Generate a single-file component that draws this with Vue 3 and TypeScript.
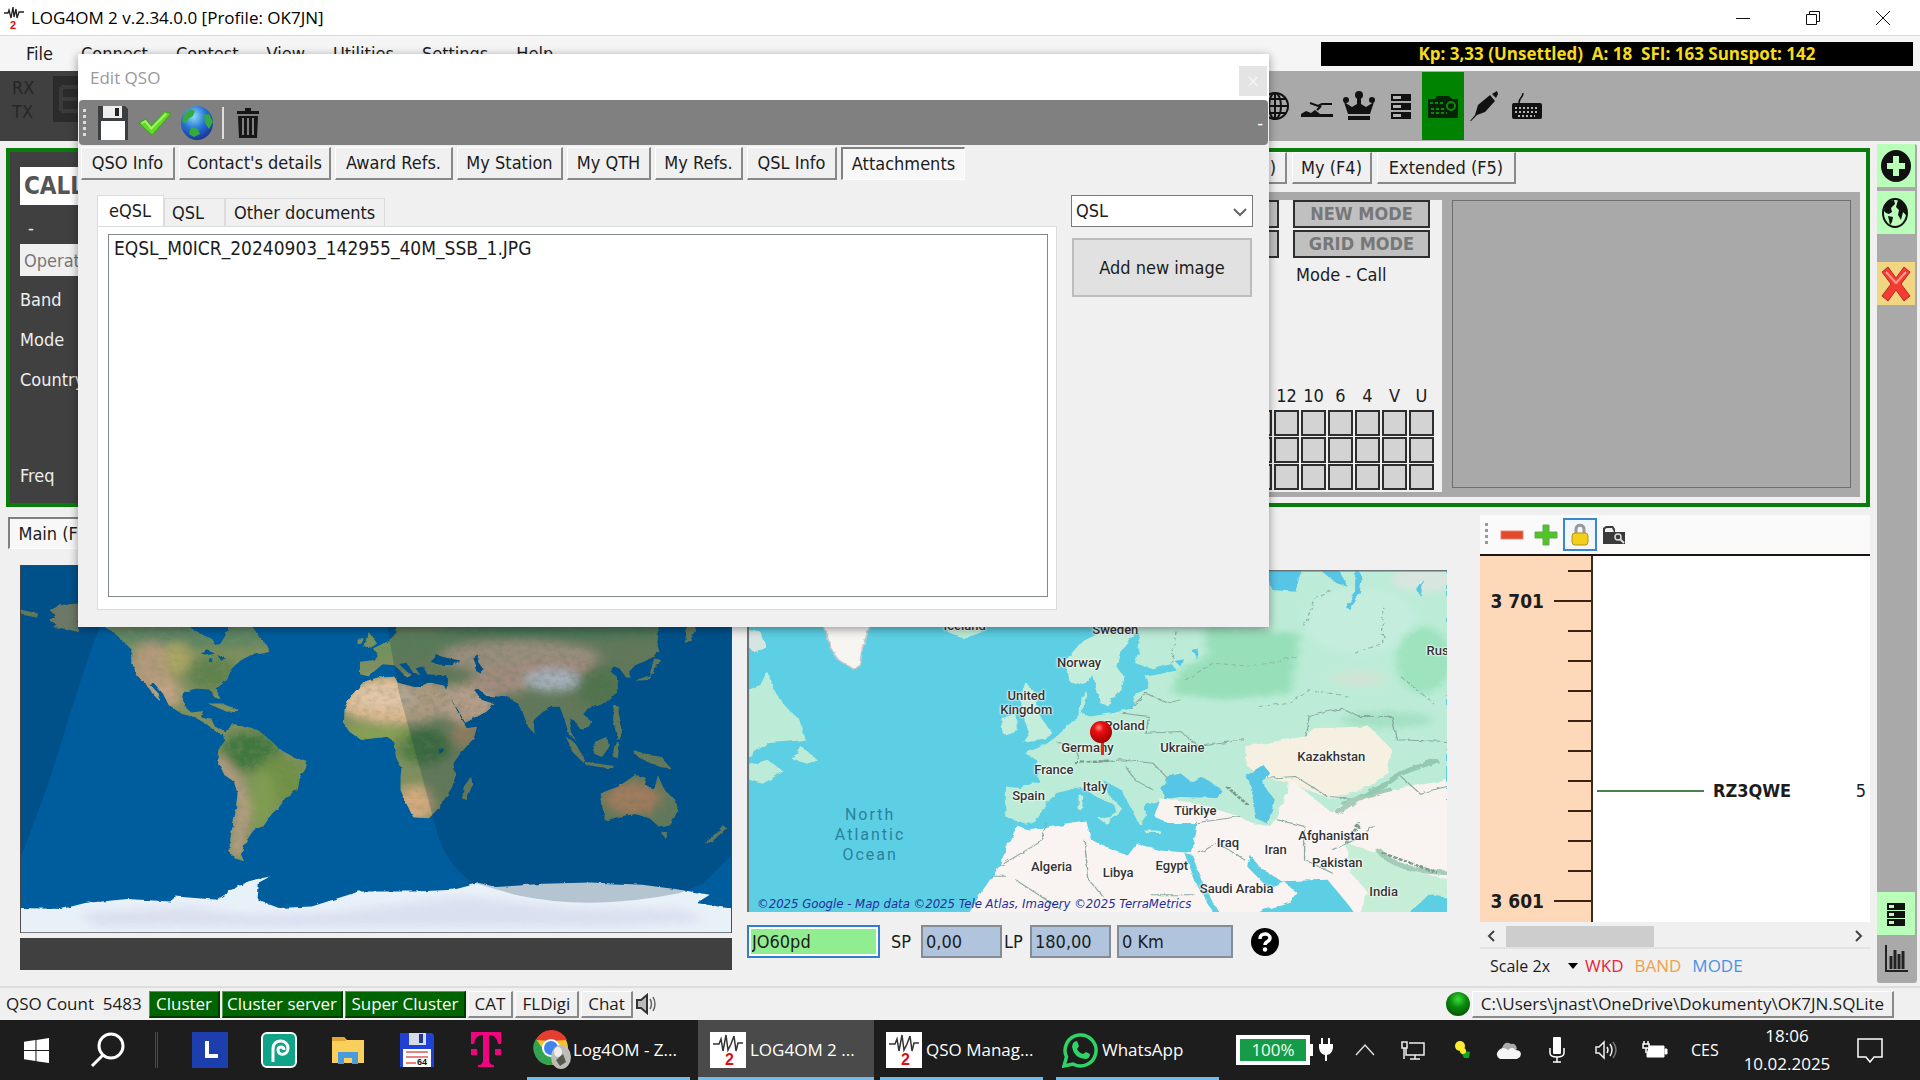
<script setup lang="ts">
interface MapLabel { text: string; x: number; y: number }

const menus = ['File', 'Connect', 'Contest', 'View', 'Utilities', 'Settings', 'Help']
const dialogTabs = ['QSO Info', "Contact's details", 'Award Refs.', 'My Station', 'My QTH', 'My Refs.', 'QSL Info', 'Attachments']
const bands = ['20', '17', '15', '12', '10', '6', '4', 'V', 'U']
const cellCount = bands.length * 3
const ticks = Array.from({ length: 12 }, (_, i) => ({ y: 16 + i * 30, major: i === 1 || i === 11 }))

// Label coordinates share the coordinate system of the map drawing.
const view = { x: 16, y: 30, w: 1524, h: 1027 }
const labels: MapLabel[] = [
  { text: 'Iceland', x: 490, y: 199 },
  { text: 'Sweden', x: 818, y: 211 },
  { text: 'Norway', x: 739, y: 309 },
  { text: 'United\nKingdom', x: 624, y: 428 },
  { text: 'Poland', x: 838, y: 497 },
  { text: 'Germany', x: 757, y: 565 },
  { text: 'Ukraine', x: 964, y: 565 },
  { text: 'France', x: 684, y: 632 },
  { text: 'Italy', x: 774, y: 683 },
  { text: 'Spain', x: 629, y: 709 },
  { text: 'Türkiye', x: 992, y: 753 },
  { text: 'Kazakhstan', x: 1288, y: 591 },
  { text: 'Russia', x: 1538, y: 272 },
  { text: 'Afghanistan', x: 1293, y: 830 },
  { text: 'Iraq', x: 1063, y: 851 },
  { text: 'Iran', x: 1167, y: 871 },
  { text: 'Pakistan', x: 1301, y: 911 },
  { text: 'Algeria', x: 679, y: 921 },
  { text: 'Libya', x: 824, y: 939 },
  { text: 'Egypt', x: 941, y: 920 },
  { text: 'Saudi Arabia', x: 1082, y: 988 },
  { text: 'India', x: 1402, y: 996 },
]
const place = (l: { x: number; y: number }) => ({
  left: `${((l.x - view.x) / view.w) * 100}%`,
  top: `${((l.y - view.y) / view.h) * 100}%`,
})
</script>

<template>
  <div class="desktop">
    <header class="titlebar">
      <svg class="app-icon" viewBox="0 0 20 24"><path d="M0 7H4L5 4 7 12 9 1 10 11 12 3 13 12 15 6H20" fill="none" stroke="#222" stroke-width="1.3" /><text x="6" y="23" class="two">2</text></svg>
      <h1>LOG4OM 2 v.2.34.0.0 [Profile: OK7JN]</h1>
      <div class="win-buttons">
        <button aria-label="Minimize"><svg viewBox="0 0 16 16"><path d="M1 8.500H15" /></svg></button>
        <button aria-label="Restore"><svg viewBox="0 0 16 16"><path d="M1.500 4.500H11.500V14.500H1.500ZM4.500 4V1.500H14.500V11.500H12" /></svg></button>
        <button aria-label="Close"><svg viewBox="0 0 16 16"><path d="M1 1 15 15M15 1 1 15" /></svg></button>
      </div>
    </header>

    <nav class="menubar">
      <button v-for="m in menus" :key="m">{{ m }}</button>
      <div class="solar">Kp: 3,33 (Unsettled)&nbsp; A: 18&nbsp; SFI: 163 Sunspot: 142</div>
    </nav>

    <div class="radiobar">
      <div class="rig">
        <div class="rxtx"><span>RX</span><span>TX</span></div>
        <div class="freq"><svg viewBox="0 0 24 30"><path d="M4 3H22M4 3V27M4 15H20M4 27H22" fill="none" stroke="#3a3a3a" stroke-width="4" /></svg></div>
      </div>
      <div class="tools">
        <button aria-label="Web"><svg viewBox="0 0 32 32" fill="none" stroke="#111" stroke-width="2"><circle cx="16" cy="16" r="13" /><ellipse cx="16" cy="16" rx="6" ry="13" /><path d="M16 3V29M3 16H29M5 9H27M5 23H27" /></svg></button>
        <button aria-label="Propagation"><svg viewBox="0 0 32 32"><path d="M0 27V24L5 21 10 23 14 20 19 24H32V27Z" fill="#111" /><path d="M9 13 17 16 21 14H31M16 20 20 16" fill="none" stroke="#111" stroke-width="2" /></svg></button>
        <button aria-label="Awards"><svg viewBox="0 0 32 32" fill="#111"><path d="M5 24 1 12 9 17 14 14V8H18V14L23 17 31 12 27 24ZM5 26H27V30H5Z" /><circle cx="16" cy="5" r="4" /><circle cx="3" cy="10" r="3" /><circle cx="29" cy="10" r="3" /></svg></button>
        <button aria-label="Cluster"><svg viewBox="0 0 32 32"><path d="M6 4H26V11H6ZM6 13H26V20H6ZM6 22H26V29H6Z" fill="#111" /><path d="M8 6H16V9H8ZM8 15H16V18H8ZM8 24H16V27H8Z" fill="#b5b5b5" /></svg></button>
        <button class="on" aria-label="Radio"><svg viewBox="0 0 32 32"><path d="M1 9H31V28H1ZM10 6H22L25 9H8Z" fill="#052405" /><circle cx="24" cy="16" r="4" fill="none" stroke="#0a8a0a" stroke-width="2" /><path d="M3 13H16M4 19H17M4 23H20" stroke="#0a8a0a" stroke-width="2" stroke-dasharray="3 2" /></svg></button>
        <button aria-label="Microphone"><svg viewBox="0 0 32 32" fill="#111"><path d="M1 31 6 25 9 15 21 5 26 11 16 22 8 25 2 31ZM23 4 28 1 29 4 27 8Z" /></svg></button>
        <button aria-label="Keyer"><svg viewBox="0 0 32 32"><rect x="1" y="13" width="30" height="16" rx="2" fill="#111" /><path d="M8 13C8 7 12 8 12 3" fill="none" stroke="#111" stroke-width="1.500" /><path d="M4 18H28M4 22H28M7 26H24" stroke="#b5b5b5" stroke-width="2" stroke-dasharray="2 2" /></svg></button>
      </div>
    </div>

    <div class="body">
      <main class="workspace">
        <section class="entry">
          <div class="entry-form">
            <label class="call"><input value="CALLSIGN" aria-label="Callsign" /></label>
            <span class="dash">-</span>
            <input class="operator" placeholder="Operator" aria-label="Operator" />
            <span class="field first">Band</span>
            <span class="field">Mode</span>
            <span class="field">Country</span>
            <span class="field last">Freq</span>
          </div>
          <div class="entry-info">
            <div class="tabrow">
              <button class="raised t1">Info (F2)</button>
              <button class="raised t2">Adds (F3)</button>
              <button class="raised t3">My (F4)</button>
              <button class="raised t4">Extended (F5)</button>
            </div>
            <div class="infopanel">
              <div class="worked">
                <div class="flags">
                  <div class="flagcol"><button disabled>NEW BAND</button><button disabled>GRID BAND</button><span>Band - Call</span></div>
                  <div class="flagcol"><button disabled>NEW MODE</button><button disabled>GRID MODE</button><span>Mode - Call</span></div>
                </div>
                <div class="bandgrid">
                  <span v-for="b in bands" :key="b">{{ b }}</span>
                  <i v-for="n in cellCount" :key="n"></i>
                </div>
              </div>
              <div class="notes"></div>
            </div>
          </div>
        </section>

        <div class="lower">
          <section class="maps">
            <div class="tabrow second"><button class="sunken">Main (F6)</button></div>
            <div class="maprow">
              <div class="worldcol">
                <div class="world">
                <svg viewBox="42 14 1508 1106" preserveAspectRatio="none">
                  <defs>
                    <filter id="rough" x="-5%" y="-5%" width="110%" height="110%"><feTurbulence type="fractalNoise" baseFrequency="0.06" numOctaves="3" seed="4" /><feDisplacementMap in="SourceGraphic" scale="9" /></filter>
                    <filter id="soft" x="-40%" y="-40%" width="180%" height="180%"><feGaussianBlur stdDeviation="12" /></filter>
                    <filter id="grain" x="0" y="0" width="100%" height="100%"><feTurbulence type="fractalNoise" baseFrequency="0.06" numOctaves="4" seed="8" /><feColorMatrix values="0 0 0 0 0.25  0 0 0 0 0.28  0 0 0 0 0.15  0 0 0 2.400 -1" /></filter>
                    <clipPath id="land">
                      <path d="M215 195 240 215 262 245 280 270V310L290 345 310 375 325 405 340 425 335 400 318 375 325 368 345 400 357 435 385 462 410 470 435 490 460 518 474 524 478 515 455 500 447 476 425 470 430 453 405 457 395 445 387 420 390 395 415 385 445 388 458 417 466 415 458 385 480 360 490 325 510 300 530 285 555 280 572 275 565 255 550 235 535 200 485 195 478 225 466 252 455 255 450 238 430 225 405 205 400 195Z" />
                      <path d="M165 130 130 134 105 150 118 165 105 180 120 192 112 200 135 205 165 215ZM42 148 80 160 78 172 52 165 42 160Z" />
                      <path d="M472 520 495 492 515 500 545 510 572 540 592 568 620 590 650 605 647 628 635 650 630 690 605 710 595 735 575 762 557 800 540 805 530 825 518 850 510 885 517 905 497 895 485 875 488 830 498 760 503 700 495 665 475 645 460 600 462 570 475 545Z" />
                      <path d="M770 365 800 352 835 350 842 368 880 382 910 368 940 376 955 420 975 470 988 505 1010 500 1003 535 975 580 960 610 964 650 957 682 945 710 925 750 908 775 875 772 862 735 848 690 848 650 850 625 838 590 835 545 820 530 790 535 765 540 740 515 728 490 730 440 745 405ZM998 650 1000 675 988 720 978 715 982 680Z" />
                      <path d="M762 342V305L790 300 800 280 790 265 820 245 835 225 840 195H1395L1390 240 1396 275 1370 300 1345 315 1332 335 1337 352 1326 352 1312 325 1300 318 1290 332 1306 350 1308 385 1295 415 1270 435 1245 445 1235 462 1252 485 1245 505 1230 510 1215 480 1205 472 1212 525 1224 545 1205 525 1195 475 1185 440 1170 440 1150 455 1130 480 1132 522 1118 500 1105 450 1095 430 1075 410 1030 408 1012 385 1003 388 1020 420 1047 432 1030 455 985 488 970 450 944 395 948 368 945 345 905 342 895 318 880 325 890 345 875 338 860 308 845 312 870 345 862 352 835 315 810 312 795 330 780 348Z" />
                      <path d="M780 215 798 250 785 262 770 258 778 240ZM755 235 770 235 765 250 755 252ZM1455 200H1475L1462 240 1450 250ZM1385 295 1400 300 1385 330 1372 360 1345 362 1375 345ZM1300 435 1310 440V470L1318 525 1308 540 1298 480ZM1198 530 1215 545 1240 600 1235 608 1215 580ZM1238 605 1300 618V628L1240 614ZM1260 545 1285 530 1290 560 1275 590 1255 580ZM1300 560 1312 545 1308 595 1298 590ZM1340 570 1375 585 1402 592 1420 625 1400 622 1375 608 1350 590ZM440 430 470 430 508 452 480 455Z" />
                      <path d="M1272 700 1310 680 1330 660 1345 645 1365 652 1368 675 1385 692 1393 645 1407 690 1430 720 1436 750 1420 795 1395 800 1375 775 1345 762 1312 770 1282 782 1276 745ZM1400 815 1413 818 1408 836ZM1530 795 1538 805 1512 840 1495 852 1500 835 1520 818Z" />
                    </clipPath>
                  </defs>
                  <rect x="42" y="14" width="1508" height="1106" fill="#005d9d" />
                  <g filter="url(#rough)">
                    <g clip-path="url(#land)">
                      <rect x="42" y="100" width="1508" height="900" fill="#7d8f5e" />
                      <g filter="url(#soft)">
                        <ellipse cx="420" cy="225" rx="200" ry="38" fill="#5b8463" />
                        <ellipse cx="320" cy="320" rx="45" ry="75" fill="#b39a7b" />
                        <ellipse cx="350" cy="400" rx="35" ry="45" fill="#c3a383" />
                        <ellipse cx="375" cy="295" rx="28" ry="50" fill="#aaa564" />
                        <ellipse cx="450" cy="340" rx="55" ry="50" fill="#5f824d" />
                        <ellipse cx="530" cy="575" rx="60" ry="60" fill="#3f773e" />
                        <ellipse cx="590" cy="660" rx="55" ry="70" fill="#6f9145" />
                        <ellipse cx="555" cy="720" rx="30" ry="90" fill="#7f9d50" />
                        <path d="M460 590 500 670 515 740 500 890" fill="none" stroke="#c3a08c" stroke-width="24" />
                        <ellipse cx="840" cy="420" rx="130" ry="72" fill="#dbb990" />
                        <ellipse cx="810" cy="410" rx="70" ry="40" fill="#e2c6a8" />
                        <ellipse cx="790" cy="520" rx="75" ry="24" fill="#87a351" />
                        <ellipse cx="900" cy="560" rx="55" ry="55" fill="#4c7a3c" />
                        <ellipse cx="880" cy="730" rx="40" ry="55" fill="#d3aa7e" />
                        <ellipse cx="985" cy="520" rx="28" ry="45" fill="#b69465" />
                        <ellipse cx="990" cy="430" rx="60" ry="60" fill="#e6bd9a" />
                        <ellipse cx="870" cy="255" rx="110" ry="40" fill="#70925c" />
                        <ellipse cx="1100" cy="290" rx="170" ry="48" fill="#c4aa8b" />
                        <ellipse cx="1060" cy="360" rx="65" ry="45" fill="#cda78d" />
                        <ellipse cx="1170" cy="325" rx="90" ry="25" fill="#d0a68d" />
                        <ellipse cx="1170" cy="360" rx="60" ry="34" fill="#d4d6da" />
                        <ellipse cx="1270" cy="380" rx="50" ry="60" fill="#66884d" />
                        <ellipse cx="1180" cy="212" rx="260" ry="25" fill="#5c8a5c" />
                        <ellipse cx="1340" cy="715" rx="60" ry="50" fill="#ce9264" />
                        <ellipse cx="135" cy="165" rx="40" ry="45" fill="#8d8f71" />
                      </g>
                      <rect x="42" y="100" width="1508" height="900" filter="url(#grain)" opacity="0.350" />
                    </g>
                    <g fill="#005a96"><path d="M912 305 925 285 945 293 972 300 960 315 930 314ZM1002 295 1015 285 1012 305 1022 325 1018 340 1005 330 1008 315ZM425 280 440 270 455 280 440 285ZM445 288 452 310 442 305ZM460 285 480 295 468 302ZM928 567 938 565 935 580 927 580Z" /></g>
                    <path d="M42 1045 130 1048 180 1030 270 1018 360 1025 372 1010 460 1020 490 990 530 962 572 950 548 968 545 1020 590 1045 660 1040 710 1018 760 995 880 995 960 990 1015 970 1050 982 1150 972 1250 968 1360 975 1440 990 1503 1005 1475 1030 1540 1045H1560V1130H32V1045Z" fill="#e8f0f8" />
                    <path d="M170 1060 400 1040 520 1065 700 1060 980 1010 1200 1045 1450 1050 1490 1085 1300 1100 200 1100Z" fill="#d6d9ed" opacity="0.700" filter="url(#soft)" />
                  </g>
                  <path d="M42 14H260L200 240C165 380 140 500 105 660L50 870 42 890ZM820 200 845 400 890 630 920 790C935 880 965 940 1005 970L1090 1005Q1250 1055 1440 1000L1490 970 1550 885V14H780Z" fill="#002947" opacity="0.220" />
                  <rect x="42" y="14" width="1508" height="1106" fill="none" stroke="#454545" stroke-width="4" />
                </svg>
                </div>
                <div class="darkstrip"></div>
              </div>

              <div class="geocol">
                <div class="geo">
                  <svg class="geomap" viewBox="16 30 1524 1027" preserveAspectRatio="none">
                    <defs>
                      <filter id="coast" x="-5%" y="-5%" width="110%" height="110%"><feTurbulence type="fractalNoise" baseFrequency="0.045" numOctaves="3" seed="3" /><feDisplacementMap in="SourceGraphic" scale="12" /></filter>
                      <filter id="haze" x="-30%" y="-30%" width="160%" height="160%"><feGaussianBlur stdDeviation="10" /></filter>
                      <clipPath id="europe"><path d="M870 200V255L862 310 900 328 940 312 952 332 905 345 885 350 890 385 865 400 855 445 810 460 762 470 745 460 756 395 742 405 740 470 720 490 690 530 665 555 622 580 645 600 652 665 610 685 580 680 578 770 605 785 625 795 650 775 665 735 690 700 720 690 745 680 775 710 815 735 820 755 800 788 828 762 835 750 800 700 790 660 830 690 850 740 870 795 884 770 885 730 915 725 902 770 935 790 990 790 1400 900 1540 850V30H900Z" /></clipPath>
                    </defs>
                    <rect x="16" y="30" width="1524" height="1027" fill="#5dcfe4" />
                    <g filter="url(#coast)">
                      <path d="M182 195 200 270 215 300 245 325 262 310 268 260 285 195Z" fill="#f6f5f2" stroke="#c8c8c8" stroke-width="4" />
                      <path d="M10 205 45 215 58 262 35 280 10 250Z" fill="#d7e5e2" />
                      <path d="M10 395 45 375 60 335 75 390 100 440 130 480 142 540 110 545 60 550 45 565 10 600ZM135 560 170 602 150 612 116 600ZM10 620 60 600 96 635 50 672 10 655ZM445 195H540L525 218 490 236 455 218Z" fill="#bcebd8" />
                      <path d="M830 190 745 245 710 300 718 365 750 375 770 350 785 430 800 436 830 385 836 350 820 320 830 270 850 235 880 195ZM622 368 645 400 650 460 680 520 665 540 618 548 632 520 618 475 610 420ZM570 475 600 462 606 510 575 525ZM738 700 748 710 745 755 738 750ZM780 775 812 772 800 795ZM880 812H915V820H885Z" fill="#c4eedb" />
                      <g clip-path="url(#europe)">
                        <rect x="560" y="20" width="990" height="900" fill="#bcecd7" />
                        <g filter="url(#haze)">
                          <path d="M1010 200 1220 220 1200 400 1050 420 940 400 960 330 1020 290Z" fill="#96dfb9" />
                          <ellipse cx="1350" cy="180" rx="120" ry="100" fill="#c4edde" />
                          <ellipse cx="1490" cy="300" rx="60" ry="100" fill="#9ce3be" />
                          <ellipse cx="1490" cy="60" rx="70" ry="35" fill="#d9e6df" />
                          <ellipse cx="1350" cy="355" rx="60" ry="25" fill="#cfe4d3" />
                          <ellipse cx="1410" cy="480" rx="100" ry="25" fill="#a4e1c3" />
                        </g>
                        <path d="M1100 560 1230 530 1250 505 1370 500 1420 570 1410 640 1370 680 1290 720 1200 670 1150 655 1105 620Z" fill="#f6f0e2" />
                        <path d="M915 715 990 730 1090 770 1110 790 1160 800 1200 660 1290 760 1330 715 1460 680 1545 660V930H900V780Z" fill="#f8f3ee" />
                      </g>
                      <path d="M605 797 630 812 755 785 765 840 810 870 845 887 865 852 915 872 985 880 995 785 1110 785 1140 805 1250 760 1545 740V1070H495L525 1000 565 920 585 850Z" fill="#f9f4f1" />
                      <path d="M970 880 985 885 1005 960 1048 1070H1035L990 960Z" fill="#5dcfe4" />
                      <path d="M1110 885 1135 925 1180 965 1280 960 1310 1010 1345 1070H1110L1190 1020 1212 1000 1180 970 1150 985 1105 920Z" fill="#5dcfe4" />
                      <path d="M1110 1065 1200 1025 1212 1000 1185 965 1150 985 1110 930 1050 900V1065Z" fill="#f9f4f1" />
                      <path d="M1320 850 1390 880 1430 920 1545 960V1070H1345L1370 1000 1330 940Z" fill="#c6eed6" />
                      <path d="M1450 1070 1500 1005 1545 1015V1070Z" fill="#5dcfe4" />
                      <path d="M1390 870C1420 920 1470 935 1545 940M1300 760 1340 720 1400 680 1440 640 1520 600M1310 730 1420 690" fill="none" stroke="#83b9a0" stroke-width="14" opacity="0.700" />
                      <path d="M920 690 935 650 960 640 985 668 1010 652 1050 690 1040 715 960 712 925 718ZM1105 645 1140 615 1155 640 1138 670 1165 720 1150 792 1122 775 1120 720ZM945 300 965 295 960 320ZM985 270 995 265 998 300ZM1140 20H1225L1210 95 1160 90ZM1255 20H1300L1325 80 1300 70ZM1340 20 1355 50 1350 100 1330 150 1318 140 1340 100ZM1475 90 1490 60 1482 110Z" fill="#57c5e6" />
                    </g>
                    <g filter="url(#coast)" fill="none" stroke="#8aa9a0" stroke-width="3">
                      <path d="M850 445 885 400 930 430 960 420M835 460 890 470 885 520 960 515 1000 560 1100 540M690 545 730 560 740 600M760 610 830 600 900 610 935 660M840 620 860 660 900 690M1230 530 1240 470 1310 445 1350 470 1420 470 1430 540 1540 545M990 790 1090 770M1000 880 1040 850 1100 900M1150 655 1210 650 1280 710 1330 715" />
                      <path d="M565 920 650 850 670 790M545 950H580M600 960 700 1050M750 840 760 960 790 1010M895 1005H990M1170 780 1230 800 1230 900 1290 940M1290 870 1340 840 1380 800M1440 650 1480 700 1540 680" />
                      <path d="M950 215 940 310M1230 200 1250 120 1290 90M970 360 1030 310 1120 320 1210 290M1130 440 1200 430 1240 390 1330 410M1340 280 1400 250 1400 140M1440 350 1510 430" stroke-dasharray="10 7" stroke="#8db7a5" />
                      <path d="M730 610 810 602M1060 680 1110 740M1320 850 1350 790M1400 880 1520 940" stroke="#789d8e" stroke-width="7" stroke-dasharray="9 4" />
                    </g>
                    <path d="M16 32H1540M18 30V1057" stroke="#6b7577" stroke-width="5" fill="none" />
                  </svg>
                  <span v-for="l in labels" :key="l.text" class="place" :style="place(l)">{{ l.text }}</span>
                  <span class="place ocean" :style="place({ x: 284, y: 825 })">North<br />Atlantic<br />Ocean</span>
                  <svg class="pin" :style="place({ x: 787, y: 516 })" viewBox="0 0 24 24"><defs><radialGradient id="pinfill" cx="40%" cy="30%" r="70%"><stop offset="0" stop-color="#ff8a80" /><stop offset="0.300" stop-color="#ec1111" /><stop offset="1" stop-color="#a30000" /></radialGradient></defs><circle cx="12" cy="12" r="11" fill="url(#pinfill)" /></svg>
                  <i class="pinstem" :style="place({ x: 787, y: 545 })"></i>
                  <span class="credit">©2025 Google - Map data ©2025 Tele Atlas, Imagery ©2025 TerraMetrics</span>
                </div>
                <div class="locrow">
                  <input class="loc" value="JO60pd" aria-label="Locator" />
                  <label for="sp">SP</label><input id="sp" class="num" value="0,00" />
                  <label for="lp">LP</label><input id="lp" class="num" value="180,00" />
                  <input class="num km" value="0 Km" aria-label="Distance" />
                  <button class="help" aria-label="Help"><svg viewBox="0 0 28 28"><circle cx="14" cy="14" r="14" fill="#000" /><path d="M9 11C9 4 19 5 19 10 19 14 14 13 14 17" fill="none" stroke="#fff" stroke-width="3.500" /><circle cx="14" cy="21.500" r="2.200" fill="#fff" /></svg></button>
                </div>
              </div>
            </div>
          </section>

          <aside class="bandmap">
            <div class="bm-tools">
              <i class="grip"></i>
              <button aria-label="Zoom out"><svg viewBox="0 0 24 24"><rect x="1" y="8" width="22" height="8" fill="#e3492b" stroke="#d9897a" /></svg></button>
              <button aria-label="Zoom in"><svg viewBox="0 0 24 24"><path d="M9 2H15V9H23V15H15V22H9V15H1V9H9Z" fill="#4fc526" stroke="#6aa35b" /></svg></button>
              <button class="locked" aria-label="Lock"><svg viewBox="0 0 24 24"><path d="M8 12V6C8 1 16 1 16 6V12" fill="none" stroke="#999" stroke-width="3" /><rect x="4" y="10" width="16" height="12" rx="3" fill="#f2cf1d" stroke="#b89310" /></svg></button>
              <button aria-label="Search"><svg viewBox="0 0 24 24"><path d="M1 21V5L4 3H11L13 6V9H23V21Z" fill="#3a3a3a" /><path d="M3 9V6L5 5H10L12 9" fill="#eee" /><circle cx="16" cy="14" r="3" fill="none" stroke="#ddd" stroke-width="1.500" /><path d="M18 16 22 20" stroke="#ddd" stroke-width="2" /></svg></button>
            </div>
            <div class="bm-body">
              <div class="ruler">
                <div v-for="t in ticks" :key="t.y" class="tick"><strong v-if="t.major">{{ t.y < 100 ? '3 701' : '3 601' }}</strong><i :class="{ major: t.major }"></i></div>
              </div>
              <div class="spots"><div class="spot"><i></i><strong>RZ3QWE</strong><span>5</span></div></div>
            </div>
            <div class="hscroll">
              <svg viewBox="0 0 12 12"><path d="M8 1 3 6 8 11" /></svg><i></i><svg class="right" viewBox="0 0 12 12"><path d="M4 1 9 6 4 11" /></svg>
            </div>
            <div class="legend"><button>Scale 2x <svg viewBox="0 0 10 6"><path d="M0 0H10L5 6Z" /></svg></button><span class="wkd">WKD</span><span class="band">BAND</span><span class="mode">MODE</span></div>
          </aside>
        </div>
      </main>

      <aside class="rail">
        <button class="green" aria-label="Add"><svg viewBox="0 0 32 36"><ellipse cx="16" cy="18" rx="15" ry="16" fill="#111" /><path d="M16 8V28M7 18H25" stroke="#b9ffb9" stroke-width="6" /></svg></button>
        <button class="green" aria-label="World"><svg viewBox="0 0 32 36"><ellipse cx="15" cy="18" rx="12" ry="14" fill="#b9ffb9" stroke="#111" stroke-width="2" /><path d="M4 16 5 10 9 6 14 5 15 9 11 13 12 17 9 19 6 18ZM8 21 13 22 12 27 10 30ZM18 5 23 7 27 14 26 20 23 17 21 25 18 20 19 15 16 12Z" fill="#111" /></svg></button>
        <button class="cancel" aria-label="Cancel"><svg viewBox="0 0 32 36"><path d="M2 6 8 1 16 12 24 1 30 6 21 18 30 30 24 35 16 24 8 35 2 30 11 18Z" fill="#f43c32" stroke="#b72a22" /><path d="M6 6 16 17 26 6" fill="none" stroke="#ff9c90" stroke-width="2" /></svg></button>
        <button class="green list" aria-label="Cluster list"><svg viewBox="0 0 32 36"><path d="M7 7H25V14H7ZM7 15H25V22H7ZM7 23H25V30H7Z" fill="#111" /><path d="M9 9H14V12H9ZM9 17H14V20H9ZM9 25H14V28H9Z" fill="#b9ffb9" /></svg></button>
        <button class="chart" aria-label="Statistics"><svg viewBox="0 0 32 36" fill="none" stroke="#222" stroke-width="3"><path d="M6 4V30H28" stroke-width="2" /><path d="M11 28V15M15 28V9M19 28V13M23 28V10" /></svg></button>
      </aside>
    </div>

    <footer class="status">
      <span class="count">QSO Count&nbsp; 5483</span>
      <button class="raised g w1">Cluster</button>
      <button class="raised g w2">Cluster server</button>
      <button class="raised g w2">Super Cluster</button>
      <button class="raised w3">CAT</button>
      <button class="raised w4">FLDigi</button>
      <button class="raised w5">Chat</button>
      <svg class="spk" viewBox="0 0 22 22"><path d="M2 7H6L12 2V20L6 15H2Z" fill="#bbb" stroke="#333" stroke-width="2" /><path d="M15 6Q18 11 15 16M18 4Q22 11 18 18" fill="none" stroke="#666" stroke-width="1.500" /></svg>
      <i class="led"></i>
      <button class="raised db">C:\Users\jnast\OneDrive\Dokumenty\OK7JN.SQLite</button>
    </footer>

    <div class="taskbar">
      <button class="tb start" aria-label="Start"><svg viewBox="0 0 24 24" fill="#fff"><path d="M0 3.500 11 2V11.500H0ZM12 1.800 24 0V11.500H12ZM0 12.500H11V22L0 20.500ZM12 12.500H24V24L12 22.200Z" /></svg></button>
      <button class="tb" aria-label="Search"><svg viewBox="0 0 36 36" fill="none" stroke="#fff" stroke-width="3"><circle cx="21" cy="14" r="12" /><path d="M13 23 2 34" /></svg></button>
      <i class="tbsep"></i>
      <button class="tb sq" aria-label="Launcher"><svg viewBox="0 0 36 36"><rect width="36" height="36" fill="#1d3fae" /><path d="M15 9V24H26" fill="none" stroke="#fff" stroke-width="4" /></svg></button>
      <button class="tb" aria-label="Photo"><svg viewBox="0 0 36 36"><rect x="1" y="1" width="34" height="34" rx="5" fill="#0fa387" stroke="#fff" stroke-width="2" /><path d="M12 30V17C12 6 27 7 27 16 27 24 17 24 17 18 17 14 23 14 23 18" fill="none" stroke="#fff" stroke-width="3" /></svg></button>
      <button class="tb" aria-label="Explorer"><svg viewBox="0 0 36 36"><path d="M2 5H14L17 8H34V31H2Z" fill="#fbcf5c" /><path d="M2 5H14L16 9H2Z" fill="#e3a533" /><path d="M8 32V20H28V32H22V26H14V32Z" fill="#4a9bdb" /></svg></button>
      <button class="tb" aria-label="Commander"><svg viewBox="0 0 36 36"><path d="M1 1H33L35 3V35H1Z" fill="#2141d5" /><rect x="10" y="1" width="17" height="12" fill="#d7dbe8" /><rect x="20" y="2" width="4" height="9" fill="#20398f" /><rect x="4" y="17" width="28" height="18" fill="#fff" /><path d="M7 20H29M7 25H29M7 31H17" stroke="#df5b5b" stroke-width="1.500" /><text x="18" y="33" class="mini">64</text></svg></button>
      <button class="tb tm" aria-label="Telekom"><svg viewBox="0 0 32 36" fill="#f0047f"><path d="M1 0H31V12H28Q27 3 19 3V28Q19 33 24 33V35H8V33Q13 33 13 28V3Q5 3 4 12H1ZM1 17H7V23H1ZM25 17H31V23H25Z" /></svg></button>
      <button class="task chrome"><svg viewBox="0 0 40 40"><circle cx="18" cy="18" r="17" fill="#f6c12c" /><path d="M3 10A17 17 0 0 1 34 10L18 11Z" fill="#e53e30" /><path d="M3 9A17 17 0 0 0 19 35L24 24 12 22Z" fill="#32a350" /><circle cx="18" cy="18" r="9" fill="#fff" /><circle cx="18" cy="18" r="7" fill="#3f83ef" /><ellipse cx="28" cy="27" rx="10" ry="12" fill="#bdbdb5" /><ellipse cx="25" cy="22" rx="4" ry="5" fill="#eee" /><path d="M23 30 30 24 33 32 27 36Z" fill="#55594c" /></svg><span>Log4OM - Z...</span></button>
      <button class="task active"><svg viewBox="0 0 36 36"><rect width="36" height="36" fill="#fff" /><path d="M3 12H9L11 7 13 19 16 3 18 18 21 12 24 4 26 19 28 11H33" fill="none" stroke="#333" stroke-width="1.500" /><text x="15" y="33" class="two big">2</text></svg><span>LOG4OM 2 ...</span></button>
      <button class="task"><svg viewBox="0 0 36 36"><rect width="36" height="36" fill="#fff" /><path d="M3 12H9L11 7 13 19 16 3 18 18 21 12 24 4 26 19 28 11H33" fill="none" stroke="#333" stroke-width="1.500" /><text x="15" y="33" class="two big">2</text></svg><span>QSO Manag...</span></button>
      <button class="task"><svg viewBox="0 0 36 36"><path d="M2 34 4.500 25A15.500 15.500 0 1 1 11 32Z" fill="none" stroke="#2fd366" stroke-width="3.500" /><path d="M12 10 15 9 17 14 15 17Q17 21 21 22L24 20 28 22Q28 27 23 27 12 26 10 15 10 12 12 10Z" fill="#2fd366" /></svg><span>WhatsApp</span></button>
      <div class="tray">
        <span class="batt">100%</span>
        <svg class="i1" viewBox="0 0 16 24" fill="#fff"><path d="M3 0H5V6H3ZM10 0H12V6H10ZM1 6H15V10Q14 16 9 17V23H7V17Q2 16 1 10Z" /></svg>
        <svg class="i2" viewBox="0 0 20 20"><path d="M1 15 10 5 19 15" fill="none" stroke="#ddd" stroke-width="1.500" /></svg>
        <svg class="i3" viewBox="0 0 24 20"><path d="M8 3H23V15H5V8M14 15V19M9 19H19M1 2H6V8H1ZM3 8V19" fill="none" stroke="#eee" stroke-width="1.500" /></svg>
        <svg class="i4" viewBox="0 0 20 20"><circle cx="8" cy="6" r="5" fill="#ffec2e" /><path d="M8 10 18 12 17 18 12 18Z" fill="#10a520" /><circle cx="11" cy="11" r="3" fill="#ffec2e" /></svg>
        <svg class="i5" viewBox="0 0 26 20"><path d="M6 8Q9 0 15 4 20 3 21 9L13 13Z" fill="#aaa" /><path d="M4 19Q-2 15 3 10 7 6 12 10 16 6 20 10 27 11 24 17L21 19Z" fill="#f5f5f5" /></svg>
        <svg class="i6" viewBox="0 0 16 26"><rect x="4" y="0" width="8" height="17" rx="1" fill="#fff" /><path d="M1 11V16Q1 20 8 20 15 20 15 16V11M8 20V25M4 25H12" fill="none" stroke="#fff" stroke-width="1.500" /></svg>
        <svg class="i7" viewBox="0 0 22 20"><path d="M1 7H4L9 2V18L4 13H1ZM12 7Q14 10 12 13M15 4Q19 10 15 16" fill="none" stroke="#eee" stroke-width="1.500" /><path d="M18 2Q24 10 18 18" fill="none" stroke="#777" stroke-width="1.500" /></svg>
        <svg class="i8" viewBox="0 0 26 20"><path d="M7 6H22V17H5V12M23 9H25V14H23Z" fill="#fff" stroke="#fff" /><path d="M2 1V4M6 1V4M1 4H7V8H1ZM4 8V13" fill="#1e1e1e" stroke="#fff" stroke-width="1.500" /></svg>
        <span class="lang">CES</span>
        <time>18:06<br />10.02.2025</time>
        <svg class="i9" viewBox="0 0 26 26"><path d="M1 2H25V20H17L13 25 9 20H1Z" fill="none" stroke="#fff" stroke-width="1.500" /></svg>
      </div>
    </div>

    <section class="dialog" role="dialog" aria-label="Edit QSO">
      <header><h2>Edit QSO</h2><button aria-label="Close dialog">×</button></header>
      <div class="dlg-tools">
        <i class="grip light"></i>
        <button aria-label="Save"><svg viewBox="0 0 32 36"><path d="M1 1H28L31 4V35H1Z" fill="#3c3f42" /><rect x="6" y="1" width="19" height="12" fill="#eee" /><rect x="18" y="3" width="4" height="8" fill="#222" /><rect x="4" y="16" width="24" height="19" fill="#fff" /></svg></button>
        <button aria-label="Confirm"><svg viewBox="0 0 36 36"><path d="M1 18 8 14 14 21 28 6 35 8 15 31Z" fill="#5fdc22" stroke="#3c9f1c" /><path d="M4 18 8 16 14 24 30 8" fill="none" stroke="#a4f26a" stroke-width="2" /></svg></button>
        <button aria-label="Lookup"><svg viewBox="0 0 34 36"><defs><radialGradient id="gl" cx="40%" cy="30%" r="75%"><stop offset="0" stop-color="#8fdcf5" /><stop offset="0.500" stop-color="#2474d6" /><stop offset="1" stop-color="#1b2c91" /></radialGradient></defs><ellipse cx="17" cy="18" rx="16" ry="17" fill="url(#gl)" /><path d="M4 10 10 4 15 6 13 11 8 14 6 18 2 17ZM11 22 18 24 20 29 14 32 9 29ZM24 10 29 9 33 17 29 24 25 18Z" fill="#35ab3d" /></svg></button>
        <i class="sep"></i>
        <button class="trash" aria-label="Delete"><svg viewBox="0 0 24 32"><path d="M9 1H15V4H23V7H1V4H9ZM2 9H22L21 31H3Z" fill="#161616" /><path d="M7 11V28M12 11V28M17 11V28" stroke="#808080" stroke-width="2" /></svg></button>
        <span class="more">-</span>
      </div>
      <div class="dlg-tabs">
        <button v-for="(t, i) in dialogTabs" :key="t" :class="[t === 'Attachments' ? 'sunken' : 'raised', 'd' + i]">{{ t }}</button>
      </div>
      <div class="dlg-body">
        <div class="attach">
          <div class="subtabs"><button class="cur">eQSL</button><button class="s2">QSL</button><button class="s3">Other documents</button></div>
          <div class="page"><ul><li>EQSL_M0ICR_20240903_142955_40M_SSB_1.JPG</li></ul></div>
        </div>
        <div class="side">
          <div class="combo">
            <select aria-label="Attachment type"><option>QSL</option></select>
            <svg viewBox="0 0 14 10"><path d="M1 2 7 8 13 2" fill="none" stroke="#666" stroke-width="2" /></svg>
          </div>
          <button class="add">Add new image</button>
        </div>
      </div>
    </section>
  </div>
</template>

<style>
html, body { margin: 0; background: #f0f0f0; }
</style>

<style scoped>
* { box-sizing: border-box; }
.desktop {
  --ui: "DejaVu Sans Condensed", "DejaVu Sans", sans-serif;
  --segoe: "Open Sans", "Noto Sans", sans-serif;
  position: relative; min-height: 100vh; display: flex; flex-direction: column;
  background: #f0f0f0; color: #1c1c1c; font: 18px/20px var(--ui); overflow: hidden;
}
button, input, select { font: inherit; color: inherit; margin: 0; }
button { border: 0; background: none; padding: 0; white-space: nowrap; }
h1, h2 { margin: 0; font-weight: 400; }
svg { display: block; }
i { display: block; font-style: normal; }

.titlebar { display: flex; align-items: center; height: 36px; background: #fff; border-bottom: 1px solid #dcdcdc; padding: 0 2px 0 4px; }
.app-icon { width: 20px; height: 24px; }
.two { font: bold 11px "Liberation Sans", sans-serif; fill: #e01010; }
.two.big { font-size: 16px; }
.titlebar h1 { font: 17px/24px var(--segoe); margin-left: 7px; color: #000; }
.win-buttons { margin-left: auto; display: flex; }
.win-buttons button { width: 70px; display: grid; place-items: center; }
.win-buttons svg { width: 16px; height: 16px; fill: none; stroke: #111; stroke-width: 1; }

.menubar { display: flex; height: 35px; align-items: center; padding-left: 26px; gap: 28px; background: #f5f5f5; }
.solar { margin-left: auto; width: 592px; margin-right: 7px; height: 24px; background: #000; color: #f4dc1e; font: 700 17px/24px var(--segoe); text-align: center; }

.radiobar { display: flex; height: 70px; background: #a9a9a9; }
.rig { width: 47%; background: #404040; display: flex; padding: 5px 12px; gap: 19px; color: #262626; }
.rxtx { display: flex; flex-direction: column; line-height: 24px; }
.freq { background: #2b2b2b; height: 46px; flex: 1; padding: 8px 4px; }
.freq svg { width: 24px; height: 30px; }
.tools { margin-left: auto; margin-right: 372px; display: flex; }
.tools button { width: 42px; height: 68px; margin-top: 1px; display: grid; place-items: center; }
.tools svg { width: 32px; height: 32px; }
.tools .on { background: #008300; }

.body { display: flex; flex: 1; min-height: 845px; }
.workspace { flex: 1; min-width: 0; display: flex; flex-direction: column; padding: 7px 7px 0 6px; }
.entry { display: flex; height: 359px; border: 4px solid #087d0b; }
.entry-form { flex: 1; background: #404040; padding: 15px 10px 0; display: flex; flex-direction: column; color: #eee; }
.call input { width: 300px; height: 38px; border: 0; background: #fff; color: #555; font-size: 24px; font-weight: 700; padding: 0 4px; display: block; }
.dash { padding-left: 8px; height: 39px; line-height: 46px; }
.operator { width: 300px; height: 32px; flex: none; border: 0; background: #f0f0f0; padding: 0 4px; }
.operator::placeholder { color: #777; opacity: 1; }
.field { flex: none; height: 40px; line-height: 40px; }
.field.first { margin-top: 4px; }
.field.last { margin-top: 56px; }
.entry-info { width: 770px; display: flex; flex-direction: column; padding: 0 6px 6px 0; }
.tabrow { display: flex; gap: 5px; height: 40px; align-items: flex-start; }
.raised { background: #f0f0f0; border: 1px solid; border-width: 1px 2px 2px 1px; border-color: #fff #888 #888 #fff; height: 32px; }
.sunken { background: #f8f8f8; border: 1px solid; border-width: 2px 1px 1px 2px; border-color: #808080 #fff #fff #808080; height: 32px; }
.t1 { width: 88px; } .t2 { width: 98px; } .t3 { width: 80px; } .t4 { width: 139px; }
.infopanel { flex: 1; background: #a9a9a9; display: flex; padding: 8px 9px 5px 8px; gap: 10px; }
.worked { flex: 1; background: #f0f0f0; display: flex; flex-direction: column; justify-content: space-between; align-items: flex-end; padding: 0 8px 2px 0; }
.flags { display: flex; gap: 14px; padding-right: 4px; }
.flagcol { width: 137px; display: flex; flex-direction: column; gap: 2px; }
.flagcol button { height: 28px; background: #c0c0c0; border: 2px solid #2e2e2e; color: #777; font-weight: 700; text-align: center; }
.flagcol span { padding: 5px 3px; }
.bandgrid { display: grid; grid-template-columns: repeat(9, 25px); gap: 1px 2px; text-align: center; }
.bandgrid span { line-height: 26px; }
.bandgrid i { height: 26px; border: 2px solid #2e2e2e; background: #d3d3d3; }
.notes { width: 399px; margin-bottom: 4px; border: 1px solid #6e6e6e; }

.lower { flex: 1; display: flex; gap: 33px; }
.maps { flex: 1; min-width: 0; display: flex; flex-direction: column; padding: 10px 0 0 2px; }
.second { height: 48px; }
.second .sunken { width: 96px; }
.maprow { flex: 1; display: flex; gap: 15px; padding-left: 12px; }
.worldcol { flex: 712; min-width: 0; display: flex; flex-direction: column; gap: 5px; padding-bottom: 16px; }
.world { position: relative; flex: 1; }
.world svg { position: absolute; width: 100%; height: 100%; }
.darkstrip { height: 32px; background: #404040; }
.geocol { flex: 700; min-width: 0; display: flex; flex-direction: column; padding: 5px 0 28px; gap: 13px; }
.geo { position: relative; flex: 1; overflow: hidden; }
.geomap { width: 100%; height: 100%; position: absolute; }
.place { position: absolute; transform: translate(-50%, -50%); white-space: pre; text-align: center; font: 500 13px/14px Roboto, sans-serif; color: #333; text-shadow: 0 0 2px #fff, 0 0 2px #fff, 0 0 3px #fff; }
.ocean { font-size: 16px; line-height: 20px; letter-spacing: 2px; color: #2b819d; text-shadow: none; font-weight: 400; }
.pin { position: absolute; width: 24px; height: 24px; transform: translate(-50%, -50%); z-index: 1; }
.pinstem { position: absolute; width: 3px; height: 14px; background: #e02828; }
.credit { position: absolute; left: 10px; bottom: 0; font: italic 13px/16px "DejaVu Sans Condensed", sans-serif; color: #1c2f9c; white-space: nowrap; }
.locrow { display: flex; height: 33px; align-items: center; }
.locrow input { height: 33px; border: 2px solid #868c95; background: #b0c4de; padding: 0 3px; min-width: 0; }
.locrow .loc { width: 133px; border-color: #2f7fd0; background: #90ee90; box-shadow: inset 0 0 0 2px #fff; margin-right: 11px; }
.locrow label { width: 30px; }
.locrow .num { width: 81px; }
.locrow #lp, .locrow #sp { flex: none; }
.locrow #lp { margin-right: 6px; }
.locrow label[for="lp"] { width: 28px; padding-left: 2px; }
.locrow .km { width: 116px; }
.help { width: 28px; height: 28px; margin-left: 18px; }

.bandmap { width: 390px; display: flex; flex-direction: column; padding-top: 8px; }
.bm-tools { display: flex; height: 39px; align-items: center; background: #fafafa; gap: 4px; padding-left: 5px; }
.grip { width: 3px; height: 24px; background: repeating-linear-gradient(#999 0 3px, transparent 3px 6px); }
.bm-tools button { width: 30px; height: 33px; display: grid; place-items: center; }
.bm-tools .grip { margin-right: 5px; }
.bm-tools .locked { width: 34px; border: 2px solid #3c86cf; background: #f1f6fb; margin: 0 -2px; }
.bm-tools svg { width: 24px; height: 24px; }
.bm-body { display: flex; flex: 1; border-top: 2px solid #1d1512; background: #fff; overflow: hidden; }
.ruler { width: 113px; background: #fdd9b9; border-right: 2px solid #3a2a20; }
.tick { height: 30px; display: flex; align-items: center; justify-content: flex-end; }
.tick i { width: 23px; height: 2px; background: #3d2216; }
.tick i.major { width: 37px; }
.tick strong { margin-right: 10px; font-size: 19px; }
.spots { flex: 1; padding: 225px 0 0 4px; }
.spot { display: flex; align-items: center; }
.spot i { width: 107px; height: 2px; background: #46824b; margin-right: 9px; }
.spot span { margin-left: auto; padding-right: 4px; }
.hscroll { display: flex; height: 22px; align-items: center; margin-top: 3px; padding: 0 6px; }
.hscroll i { width: 148px; height: 21px; margin-left: 8px; background: #cdcdcd; }
.hscroll svg { width: 12px; height: 12px; fill: none; stroke: #444; stroke-width: 2; }
.hscroll .right { margin-left: auto; }
.legend { display: flex; align-items: center; height: 35px; gap: 11px; padding-left: 10px; margin-bottom: 4px; border-top: 2px solid #e2e2e2; font: 17px/20px var(--segoe); }
.legend button { display: flex; align-items: center; gap: 18px; font-size: 16px; }
.legend svg { width: 10px; height: 6px; margin-right: -4px; }
.wkd { color: #e8253b; } .band { color: #eda04d; } .mode { color: #4a90e8; }

.rail { width: 40px; margin: 3px 3px 3px 0; background: #a9a9a9; display: flex; flex-direction: column; align-items: flex-start; gap: 4px; border-radius: 3px; }
.rail button { width: 38px; height: 43px; display: grid; place-items: center; }
.rail svg { width: 32px; height: 36px; }
.green { background: #b9ffb9; }
.rail .cancel { background: #f0d583; margin-top: 24px; }
.rail .list { margin-top: auto; }
.rail .chart { margin-top: -4px; height: 48px; }

.status { display: flex; height: 34px; align-items: center; gap: 2px; padding-left: 6px; border-top: 2px solid #dedede; font: 17px/20px var(--segoe); }
.status .raised { height: 27px; text-align: center; }
.count { width: 141px; white-space: nowrap; }
.status .g { background: #006400; color: #fff; border-color: #5a9a5a #003b00 #003b00 #5a9a5a; }
.w1 { width: 71px; } .w2 { width: 121px; } .w3 { width: 45px; } .w4 { width: 64px; } .w5 { width: 52px; }
.spk { width: 22px; height: 22px; }
.led { margin-left: auto; width: 24px; height: 24px; border-radius: 50%; background: radial-gradient(circle at 50% 30%, #3fdc3f, #0b8a0b 40%, #033c03); }
.status .db { width: 422px; margin-right: 26px; }

.taskbar { display: flex; height: 60px; background: #1d1d1d; color: #fff; align-items: center; padding-left: 18px; font: 17px/20px var(--segoe); }
.tb { width: 36px; height: 60px; display: grid; place-items: center; margin-right: 33px; }
.tb svg { width: 36px; height: 36px; }
.start { margin-right: 36px; }
.start svg { width: 25px; height: 25px; }
.tbsep { width: 3px; height: 36px; margin: 0 34px 0 -4px; border: 1px solid #4a4a4a; border-width: 0 1px; }
.mini { font: bold 9px "Liberation Sans", sans-serif; fill: #111; }
.tm svg { width: 32px; }
.tm { margin-right: 23px; }
.task { height: 60px; width: 163px; margin-right: 13px; display: flex; align-items: center; gap: 4px; padding-left: 6px; border-bottom: 3px solid #76b9ed; border-top: 3px solid transparent; }
.task svg { width: 36px; height: 36px; flex: none; }
.task.chrome { margin-right: 8px; gap: 0; }
.task.chrome svg { width: 40px; height: 40px; }
.task.active { background: #4a4a4a; width: 176px; padding-left: 12px; margin-right: 6px; border-top-color: #4a4a4a; }
.tray { margin-left: auto; display: flex; align-items: center; padding-right: 37px; }
.batt { position: relative; width: 74px; height: 30px; border: 4px solid #fff; background: #169c49; text-align: center; line-height: 22px; margin-right: 8px; color: #f0fff0; }
.batt::after { content: ""; position: absolute; right: -7px; top: 5px; width: 3px; height: 12px; background: #fff; }
.i1 { width: 16px; height: 24px; margin-right: 21px; }
.i2 { width: 20px; height: 20px; margin-right: 26px; }
.i3 { width: 24px; height: 20px; margin-right: 27px; }
.i4 { width: 20px; height: 20px; margin-right: 24px; }
.i5 { width: 26px; height: 20px; margin-right: 27px; }
.i6 { width: 16px; height: 26px; margin-right: 30px; }
.i7 { width: 22px; height: 20px; margin-right: 25px; }
.i8 { width: 26px; height: 20px; margin-right: 23px; }
.i9 { width: 26px; height: 26px; }
.lang { width: 32px; font-size: 16px; }
.tray time { width: 128px; margin-right: 6px; text-align: center; font-size: 17px; line-height: 28px; }

.dialog { position: absolute; left: 78px; right: 651px; top: 54px; background: #f0f0f0; box-shadow: 0 2px 9px rgba(0, 0, 0, 0.400); padding-bottom: 17px; }
.dialog header { display: flex; height: 46px; background: #fff; justify-content: space-between; padding: 12px 2px 0 12px; }
.dialog h2 { font: 17px/24px var(--segoe); color: #999; }
.dialog header button { width: 28px; height: 30px; background: #e4e4e4; color: #f4f4f4; }
.dlg-tools { display: flex; align-items: center; height: 45px; background: #808080; border-radius: 4px; margin: 0 1px; padding-left: 4px; }
.light { height: 28px; background: repeating-linear-gradient(#ddd 0 3px, transparent 3px 6px); margin-right: 10px; }
.dlg-tools button { margin-right: 8px; }
.dlg-tools svg { width: 34px; height: 36px; }
.dlg-tools .sep { width: 2px; height: 32px; background: #ddd; }
.dlg-tools .trash { margin-left: 12px; }
.dlg-tools .trash svg { width: 24px; height: 32px; }
.more { margin-left: auto; color: #fff; padding-right: 5px; }
.dlg-tabs { display: flex; gap: 4px; padding: 2px 3px 0; height: 50px; }
.dlg-tabs button { height: 33px; }
.d0 { width: 94px; } .d1 { width: 152px; } .d2 { width: 118px; } .d3 { width: 106px; } .d4 { width: 84px; } .d5 { width: 88px; } .d6 { width: 90px; } .d7 { width: 124px; }
.dlg-body { display: flex; gap: 14px; padding: 0 16px 0 19px; }
.attach { flex: 1; min-width: 0; }
.subtabs { display: flex; align-items: flex-end; height: 31px; }
.subtabs button { height: 28px; border: 1px solid #dcdcdc; border-bottom: 0; text-align: left; padding: 0 7px; }
.subtabs .cur { height: 31px; width: 67px; background: #fff; padding: 0 11px; }
.subtabs .s2 { width: 61px; }
.subtabs .s3 { width: 160px; padding: 0 8px; }
.page { background: #fff; border: 1px solid #dcdcdc; padding: 7px 8px 12px 10px; }
.page ul { height: 363px; margin: 0; padding: 3px 5px; list-style: none; border: 1px solid #828790; font-size: 19px; }
.side { width: 182px; }
.combo { position: relative; height: 32px; margin-bottom: 11px; }
.combo select { appearance: none; width: 100%; height: 32px; border: 1px solid #7a7a7a; border-radius: 0; background: #fff; padding: 0 4px; }
.combo svg { position: absolute; right: 6px; top: 12px; width: 14px; height: 10px; pointer-events: none; }
.add { width: 180px; height: 59px; background: #e1e1e1; border: 2px solid #bdbdbd; margin-left: 1px; }
</style>
